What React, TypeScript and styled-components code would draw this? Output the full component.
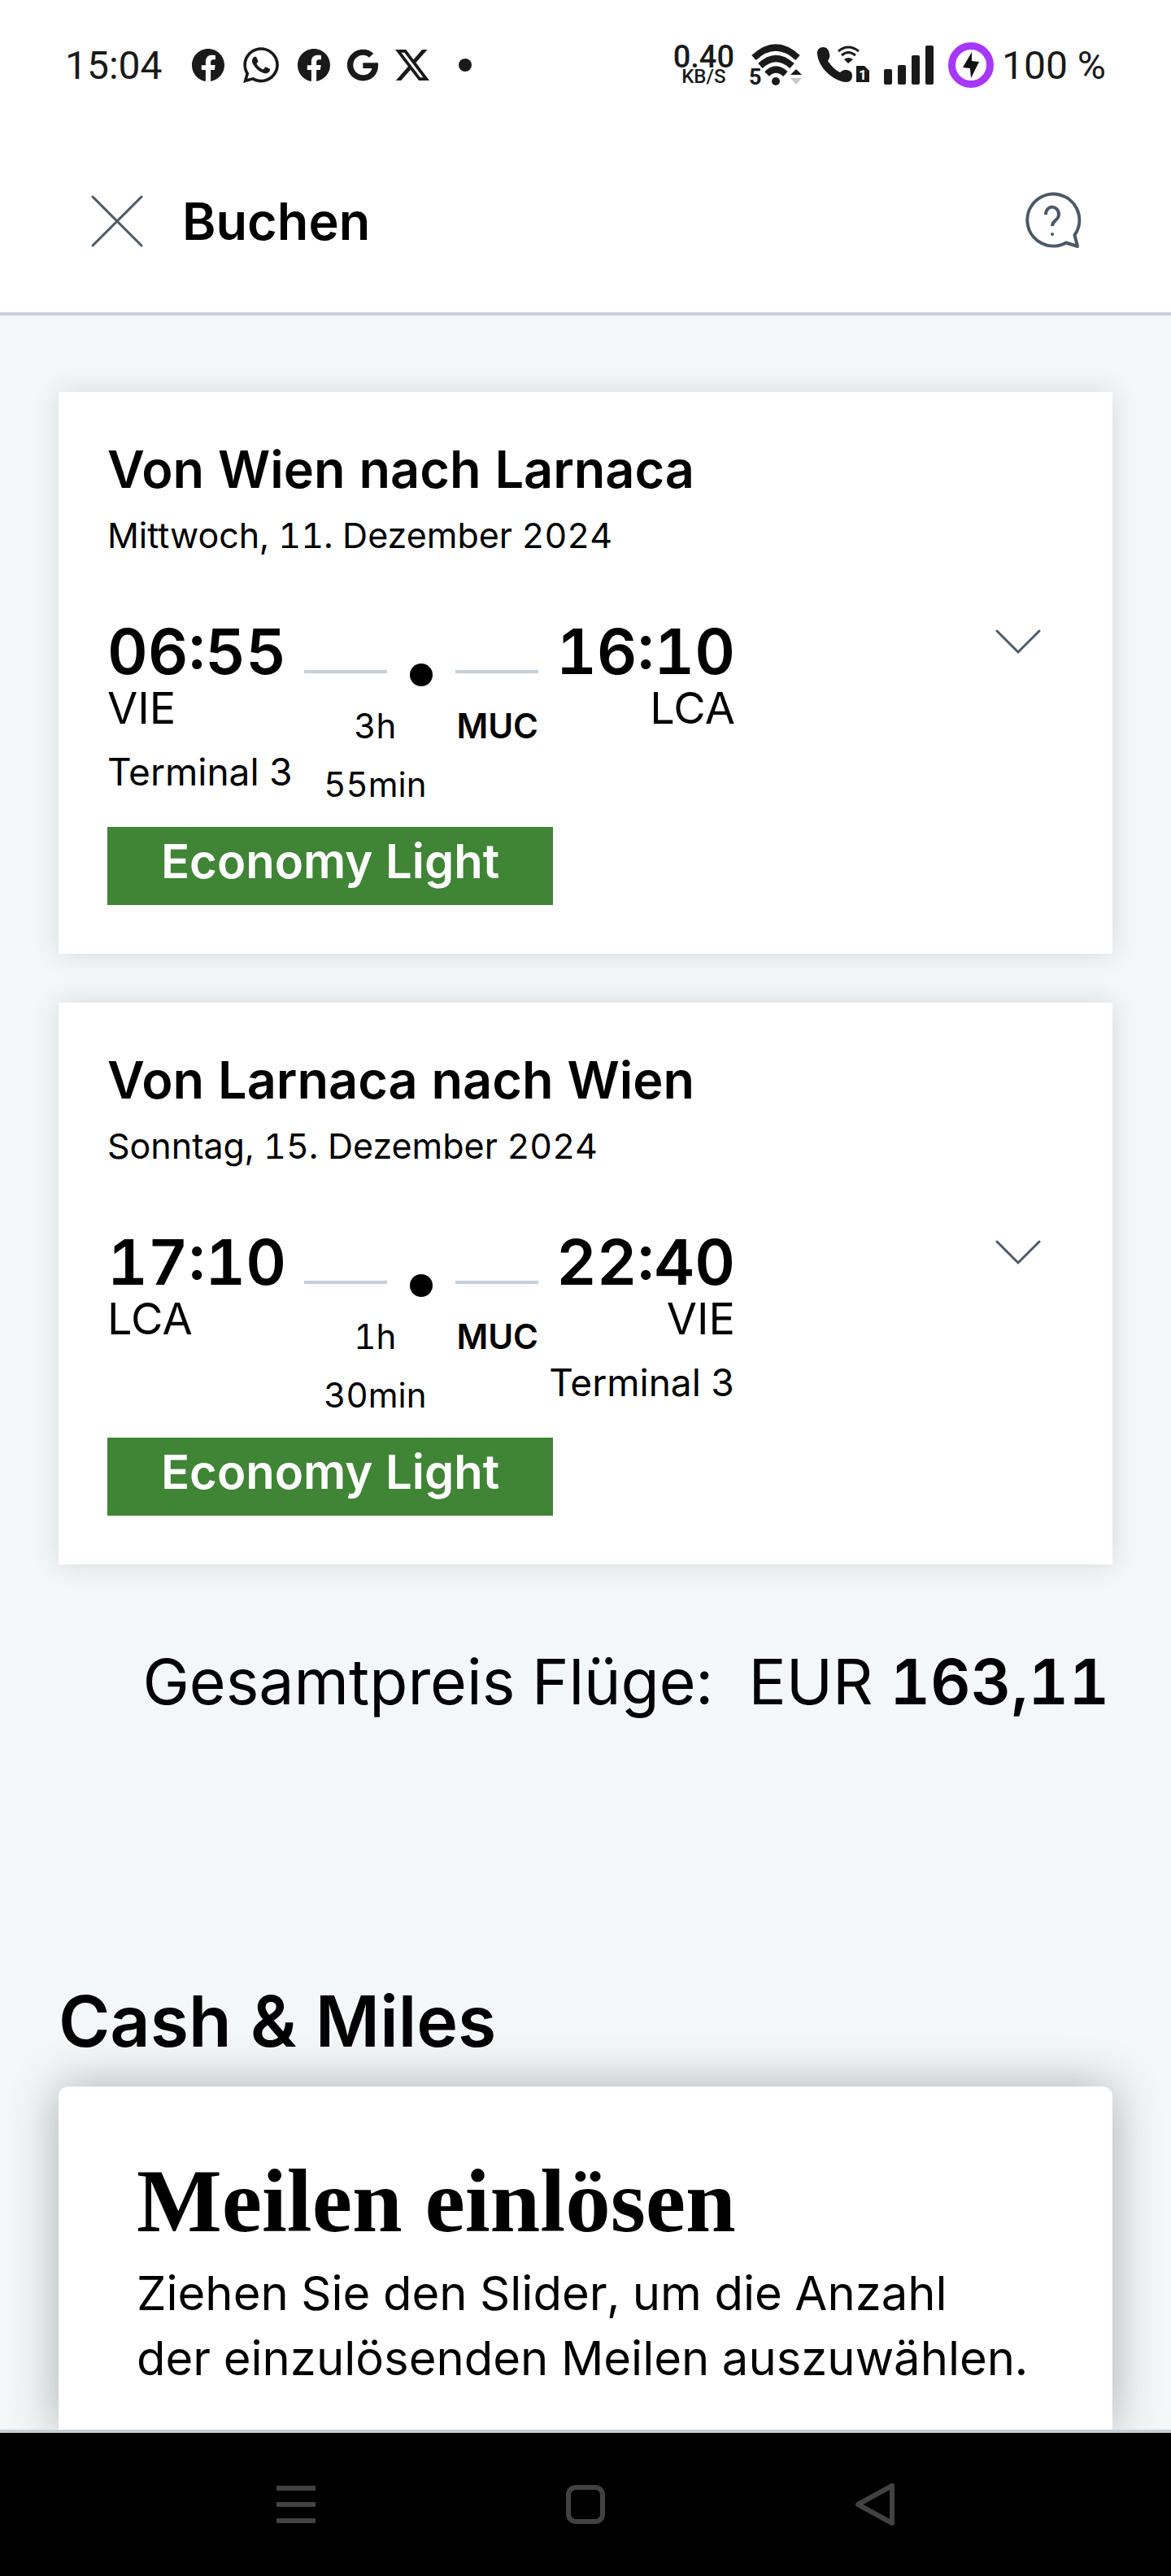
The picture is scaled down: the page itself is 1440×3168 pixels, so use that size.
import React from "react";
import styled, { createGlobalStyle } from "styled-components";
import { FaWhatsapp, FaGoogle } from "react-icons/fa";
import { BsFacebook, BsTwitterX } from "react-icons/bs";

const GlobalStyle = createGlobalStyle`
  * { box-sizing: border-box; }
  body { margin: 0; background: #f3f7f8; color: #000; font-family: Inter, "Liberation Sans", sans-serif; font-variant-numeric: tabular-nums; }
  h1, h2, h3, p { margin: 0; }
  svg { display: block; flex: none; overflow: visible; }
  button { padding: 0; border: 0; background: none; color: inherit; font: inherit; cursor: pointer; }
`;

const Screen = styled.div`
  display: flex;
  flex-direction: column;
  min-height: 100vh;
`;

const StatusBar = styled.div`
  display: flex;
  justify-content: space-between;
  align-items: center;
  height: 160px;
  padding: 0 80px;
  background: #fff;
  color: #1a1a1a;
  font-family: Roboto, "Liberation Sans", sans-serif;
  font-size: 48px;
`;

const StatusGroup = styled.div<{ $gap: number }>`
  display: flex;
  align-items: center;
  gap: ${(p) => p.$gap}px;
`;

const Clock = styled.span`
  margin-right: 16px;
`;

const MoreDot = styled.span`
  width: 16px;
  height: 16px;
  margin-left: 16px;
  border-radius: 50%;
  background: #1a1a1a;
`;

const Speed = styled.div`
  display: flex;
  flex-direction: column;
  align-items: center;
  font-size: 38px;
  font-weight: 500;
  line-height: 28px;
`;

const SpeedUnit = styled.span`
  font-size: 24px;
  line-height: 20px;
`;

const Header = styled.header`
  display: flex;
  align-items: center;
  gap: 44px;
  height: 228px;
  padding: 0 110px 0 108px;
  border-bottom: 4px solid #c9cdd9;
  background: #fff;
`;

const IconButton = styled.button`
  display: flex;
  align-items: center;
  justify-content: center;
  width: 72px;
  height: 72px;
  color: #4c5966;
`;

const HeaderTitle = styled.h1`
  flex: 1;
  font-size: 63px;
  font-weight: 600;
  line-height: 72px;
`;

const Main = styled.main`
  display: flex;
  flex: 1;
  flex-direction: column;
  padding: 94px 72px 0;
`;

const FlightList = styled.div`
  display: flex;
  flex-direction: column;
  gap: 60px;
`;

const Card = styled.section`
  padding: 60px;
  background: #fff;
  box-shadow: 0 0 32px rgba(0, 0, 0, 0.12);
`;

const CardTitle = styled.h2`
  font-size: 63px;
  font-weight: 600;
  line-height: 70px;
`;

const FlightDate = styled.p`
  margin-top: 18px;
  font-size: 43px;
  line-height: 56px;
`;

const RouteRow = styled.div`
  display: flex;
  align-items: flex-start;
  justify-content: space-between;
  margin-top: 75px;
`;

const Route = styled.div`
  display: grid;
  grid-template-columns: 242px 288px 242px;
`;

const Endpoint = styled.div<{ $end?: boolean }>`
  display: flex;
  flex-direction: column;
  align-items: ${(p) => (p.$end ? "flex-end" : "flex-start")};
  white-space: nowrap;
`;

const Time = styled.span`
  font-size: 77px;
  font-weight: 600;
  line-height: 80px;
`;

const Airport = styled.span`
  font-size: 54px;
  line-height: 60px;
`;

const Terminal = styled.span`
  margin-top: 20px;
  font-size: 46px;
  line-height: 56px;
`;

const Connection = styled.div`
  padding-top: 55px;
`;

const Track = styled.div`
  display: flex;
  justify-content: space-between;
`;

const Line = styled.span`
  width: 102px;
  height: 4px;
  margin-top: 8px;
  background: #c5cfd8;
`;

const StopDot = styled.span`
  width: 28px;
  height: 28px;
  border-radius: 50%;
  background: #000;
`;

const StopInfo = styled.div`
  display: flex;
  justify-content: flex-end;
  gap: 34px;
  margin-top: 13px;
  font-size: 42px;
  line-height: 72px;
`;

const Duration = styled.span`
  width: 132px;
  text-align: center;
`;

const Fare = styled.span`
  display: inline-block;
  margin-top: 16px;
  padding: 0 66px 12px;
  background: #408436;
  color: #fff;
  font-size: 58px;
  font-weight: 600;
  line-height: 84px;
  vertical-align: top;
`;

const Total = styled.p`
  display: flex;
  justify-content: flex-end;
  gap: 44px;
  margin-top: 96px;
  padding-right: 4px;
  font-size: 77px;
  line-height: 96px;
  white-space: nowrap;
`;

const Amount = styled.strong`
  font-weight: 600;
`;

const SectionTitle = styled.h2`
  margin-top: 318px;
  font-size: 86px;
  font-weight: 600;
  line-height: 104px;
`;

const MilesPanel = styled.section`
  flex: 1;
  margin-top: 28px;
  padding: 80px 96px 47px;
  border-radius: 12px 12px 0 0;
  background: #fff;
  box-shadow: 0 0 60px rgba(0, 0, 0, 0.3);
`;

const MilesTitle = styled.h3`
  font-family: "Liberation Serif", serif;
  font-size: 111px;
  font-weight: 700;
  line-height: 122px;
`;

const MilesText = styled.p`
  margin-top: 12px;
  font-size: 58px;
  line-height: 80px;
`;

const SystemNav = styled.nav`
  display: flex;
  align-items: center;
  justify-content: center;
  gap: 284px;
  height: 180px;
  border-top: 4px solid #c6cfd3;
  background: #000;
  /* keeps the panel shadow from spilling onto the bar */
  z-index: 1;
  position: relative;
`;

const NavButton = styled(IconButton)`
  color: #424242;
`;

const WifiIcon = () => (
  <svg width="66" height="52" viewBox="0 0 66 52" fill="none" stroke="#1a1a1a">
    <path d="M6 17 Q33 -8 60 17" strokeWidth="8" />
    <path d="M14 27 Q33 9 53 27" strokeWidth="8" />
    <path d="M22 37 Q33 26 45 37" strokeWidth="8" />
    <circle cx="33" cy="46" r="5" fill="#1a1a1a" stroke="none" />
    <path d="M51 38 L58 31 L65 38 Z" fill="#1a1a1a" stroke="none" />
    <path d="M51 42 L58 50 L65 42 Z" fill="#c8c8c8" stroke="none" />
    <text x="0" y="50" fontSize="27" fontWeight="700" fill="#1a1a1a" stroke="#fff" strokeWidth="2" paintOrder="stroke">5</text>
  </svg>
);

const CallIcon = () => (
  <svg width="64" height="48" viewBox="0 0 64 48" fill="#1a1a1a">
    <path d="M7 2 C3 2 0 5 0 9 C0 26 20 45 36 45 C41 45 43 41 43 37 C43 32 39 30 35 30 C31 30 30 32 28 33 C22 30 17 25 13 19 C14 17 16 15 15 10 C14 5 12 2 7 2 Z" />
    <path d="M26 7 Q38 -3 51 7" fill="none" stroke="#1a1a1a" strokeWidth="3" />
    <path d="M30 12 Q38 5 47 12" fill="none" stroke="#1a1a1a" strokeWidth="3" />
    <path d="M33 17 Q38 13 44 17 L38 22 Z" />
    <path d="M48 25 H58 L64 31 V45 H48 Z" />
    <text x="51" y="42" fontSize="17" fontWeight="700" fill="#fff">1</text>
  </svg>
);

const SignalIcon = () => (
  <svg width="61" height="48" viewBox="0 0 61 48" fill="#1a1a1a">
    <rect x="0" y="29" width="10" height="19" rx="2" />
    <rect x="17" y="24" width="10" height="24" rx="2" />
    <rect x="34" y="12" width="10" height="36" rx="2" />
    <rect x="51" y="0" width="10" height="48" rx="2" />
  </svg>
);

const BatteryIcon = () => (
  <svg width="56" height="56" viewBox="0 0 56 56">
    <circle cx="28" cy="28" r="23.500" fill="#fff" stroke="#a637fb" strokeWidth="9" />
    <path d="M29 12 L18 31 L27 32 L28 44 L38 24 L29 23 Z" fill="#111" />
  </svg>
);

const CloseIcon = () => (
  <svg width="64" height="64" viewBox="0 0 64 64" stroke="currentColor" strokeWidth="3" strokeLinecap="round">
    <path d="M2 2 L62 62 M62 2 L2 62" />
  </svg>
);

const HelpIcon = () => (
  <svg width="68" height="68" viewBox="0 0 68 68" fill="none" stroke="currentColor" strokeWidth="4" strokeLinejoin="round">
    <path d="M51 60.500 A32 32 0 1 1 61.500 51 L65 65 Z" />
    <path d="M26 26 C26 13 42 14 42 26 C42 33 34 33 34 40" />
    <circle cx="34" cy="50" r="2" fill="currentColor" stroke="none" />
  </svg>
);

const ChevronIcon = () => (
  <svg width="56" height="30" viewBox="0 0 56 30" fill="none" stroke="currentColor" strokeWidth="3" strokeLinecap="round">
    <path d="M2 2 L28 28 L54 2" />
  </svg>
);

interface Flight {
  title: string;
  date: string;
  from: { time: string; code: string; terminal?: string };
  to: { time: string; code: string; terminal?: string };
  duration: string;
  stop: string;
  fare: string;
}

const flights: Flight[] = [
  {
    title: "Von Wien nach Larnaca",
    date: "Mittwoch, 11. Dezember 2024",
    from: { time: "06:55", code: "VIE", terminal: "Terminal 3" },
    to: { time: "16:10", code: "LCA" },
    duration: "3h 55min",
    stop: "MUC",
    fare: "Economy Light",
  },
  {
    title: "Von Larnaca nach Wien",
    date: "Sonntag, 15. Dezember 2024",
    from: { time: "17:10", code: "LCA" },
    to: { time: "22:40", code: "VIE", terminal: "Terminal 3" },
    duration: "1h 30min",
    stop: "MUC",
    fare: "Economy Light",
  },
];

const Toggle = styled(IconButton)`
  width: 112px;
  height: 56px;
`;

const FlightCard = ({ flight }: { flight: Flight }) => (
  <Card>
    <CardTitle>{flight.title}</CardTitle>
    <FlightDate>{flight.date}</FlightDate>
    <RouteRow>
      <Route>
        <Endpoint>
          <Time>{flight.from.time}</Time>
          <Airport>{flight.from.code}</Airport>
          {flight.from.terminal && <Terminal>{flight.from.terminal}</Terminal>}
        </Endpoint>
        <Connection>
          <Track>
            <Line />
            <StopDot />
            <Line />
          </Track>
          <StopInfo>
            <Duration>{flight.duration}</Duration>
            <Amount>{flight.stop}</Amount>
          </StopInfo>
        </Connection>
        <Endpoint $end>
          <Time>{flight.to.time}</Time>
          <Airport>{flight.to.code}</Airport>
          {flight.to.terminal && <Terminal>{flight.to.terminal}</Terminal>}
        </Endpoint>
      </Route>
      <Toggle aria-label="Details anzeigen">
        <ChevronIcon />
      </Toggle>
    </RouteRow>
    <Fare>{flight.fare}</Fare>
  </Card>
);

export default function App() {
  return (
    <Screen>
      <GlobalStyle />
      <StatusBar>
        <StatusGroup $gap={20}>
          <Clock>15:04</Clock>
          <BsFacebook size={40} />
          <FaWhatsapp size={50} />
          <BsFacebook size={40} />
          <FaGoogle size={40} />
          <BsTwitterX size={42} />
          <MoreDot />
        </StatusGroup>
        <StatusGroup $gap={18}>
          <Speed>
            0.40
            <SpeedUnit>KB/S</SpeedUnit>
          </Speed>
          <WifiIcon />
          <CallIcon />
          <SignalIcon />
          <StatusGroup $gap={10}>
            <BatteryIcon />
            <span>100 %</span>
          </StatusGroup>
        </StatusGroup>
      </StatusBar>
      <Header>
        <IconButton aria-label="Schließen">
          <CloseIcon />
        </IconButton>
        <HeaderTitle>Buchen</HeaderTitle>
        <IconButton aria-label="Hilfe">
          <HelpIcon />
        </IconButton>
      </Header>
      <Main>
        <FlightList>
          {flights.map((flight) => (
            <FlightCard key={flight.title} flight={flight} />
          ))}
        </FlightList>
        <Total>
          <span>Gesamtpreis Flüge:</span>
          <span>
            EUR <Amount>163,11</Amount>
          </span>
        </Total>
        <SectionTitle>Cash &amp; Miles</SectionTitle>
        <MilesPanel>
          <MilesTitle>Meilen einlösen</MilesTitle>
          <MilesText>
            Ziehen Sie den Slider, um die Anzahl
            <br />
            der einzulösenden Meilen auszuwählen.
          </MilesText>
        </MilesPanel>
      </Main>
      <SystemNav>
        <NavButton aria-label="Letzte Apps">
          <svg width="48" height="46" viewBox="0 0 48 46" fill="currentColor">
            <rect y="0" width="48" height="6" rx="1" />
            <rect y="20" width="48" height="6" rx="1" />
            <rect y="40" width="48" height="6" rx="1" />
          </svg>
        </NavButton>
        <NavButton aria-label="Startseite">
          <svg width="48" height="48" viewBox="0 0 48 48" fill="none" stroke="currentColor" strokeWidth="6">
            <rect x="3" y="3" width="42" height="42" rx="9" />
          </svg>
        </NavButton>
        <NavButton aria-label="Zurück">
          <svg width="50" height="54" viewBox="0 0 50 54" fill="none" stroke="currentColor" strokeWidth="6" strokeLinejoin="round">
            <path d="M46 4 V50 L4 27 Z" />
          </svg>
        </NavButton>
      </SystemNav>
    </Screen>
  );
}
